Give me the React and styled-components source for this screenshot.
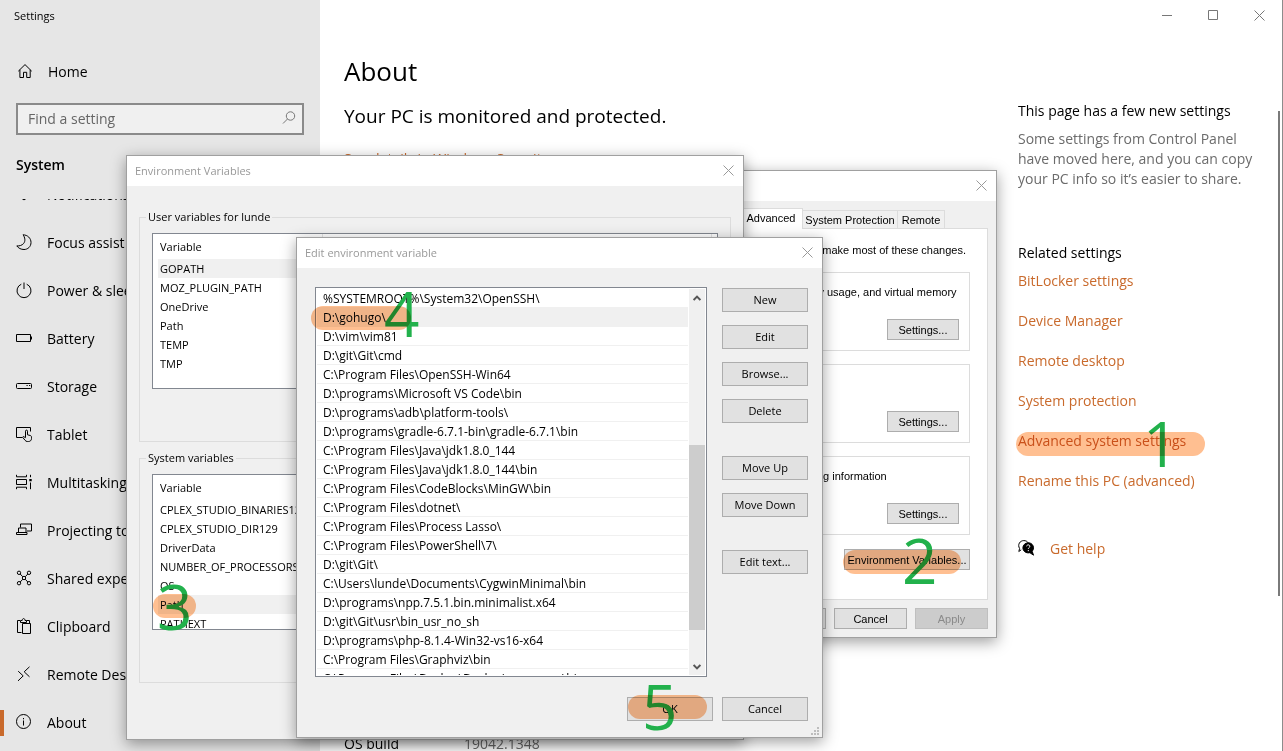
import React from "react";
import styled, { createGlobalStyle, css } from "styled-components";

const ui = '"Open Sans", "Noto Sans", sans-serif';
const legacy = '"Liberation Sans", Arial, sans-serif';
const accent = "#c96a2c";

const GlobalStyle = createGlobalStyle`
  *, *::before, *::after { box-sizing: border-box; }
  body { margin: 0; font-family: ${ui}; color: #000; background: #fff; overflow: hidden; }
  button, input { font: inherit; color: inherit; }
  h1, h2, p, ul, dl, dd { margin: 0; padding: 0; }
  ul { list-style: none; }
`;

/* ---------- Settings window ---------- */

const Desktop = styled.div`
  position: relative;
  display: flex;
  height: 100vh;
  overflow: hidden;
  font-size: 14px;
  line-height: 20px;
  border-right: 1px solid #8c8c8c;
`;

const Sidebar = styled.aside`
  display: flex;
  flex-direction: column;
  flex: 0 0 320px;
  background: #e6e6e6;
`;

const AppTitle = styled.div`
  padding: 8px 14px;
  font-size: 11px;
  line-height: 16px;
`;

const HomeLink = styled.a`
  display: flex;
  align-items: center;
  gap: 15px;
  height: 48px;
  margin-top: 16px;
  padding-left: 17px;
  color: inherit;
  text-decoration: none;
`;

const SearchBox = styled.label`
  display: flex;
  align-items: center;
  height: 32px;
  margin: 7px 16px 0;
  padding: 0 5px 0 10px;
  background: #f0f0f0;
  border: 2px solid #8a8a8a;
  color: #777;
`;

const SearchInput = styled.input`
  flex: 1;
  min-width: 0;
  padding: 0;
  border: 0;
  outline: 0;
  background: transparent;
  &::placeholder { color: #666; opacity: 1; }
`;

const SectionTitle = styled.h2`
  margin: 20px 16px 0;
  font-size: 14px;
  line-height: 20px;
  font-weight: 600;
`;

const NavScroll = styled.nav`
  flex: 1;
  min-height: 0;
  margin-top: 24px;
  overflow: hidden;
`;

const NavList = styled.ul`
  margin-top: -28px;
`;

const NavItem = styled.a`
  display: flex;
  align-items: center;
  gap: 15px;
  height: 48px;
  padding-left: 12px;
  border-left: 4px solid transparent;
  color: inherit;
  text-decoration: none;
  white-space: nowrap;
  ${(p) =>
    p.$active &&
    css`
      border-image: linear-gradient(transparent 25%, ${accent} 25% 75%, transparent 75%) 1;
      border-width: 0 0 0 4px;
      border-style: solid;
    `}
`;

const Icon = styled.svg.attrs({ "aria-hidden": true })`
  flex: none;
  width: 16px;
  height: 16px;
  margin-bottom: 2px;
  fill: none;
  stroke: currentColor;
  stroke-width: 1;
  overflow: visible;
`;

const Content = styled.main`
  display: flex;
  flex-direction: column;
  flex: 1;
  min-width: 0;
`;

const Captions = styled.div`
  display: flex;
  justify-content: flex-end;
  height: 30px;
`;

const CaptionButton = styled.button`
  display: grid;
  place-items: center;
  width: 46px;
  height: 30px;
  padding: 0;
  border: 0;
  background: none;
  color: #777;
`;

const Columns = styled.div`
  display: flex;
  flex: 1;
  min-height: 0;
  padding-left: 24px;
`;

const Details = styled.section`
  flex: 1;
  padding-top: 23px;
`;

const PageTitle = styled.h1`
  font-size: 26px;
  line-height: 36px;
  font-weight: 400;
`;

const Status = styled.h2`
  margin-top: 13px;
  font-size: 19px;
  line-height: 28px;
  font-weight: 400;
`;

const Link = styled.a`
  color: ${accent};
  text-decoration: none;
`;

const SecurityLink = styled(Link)`
  display: block;
  margin-top: 19px;
`;

const Specs = styled.dl`
  display: grid;
  grid-template-columns: 120px 1fr;
  margin-top: 565px;
  dd { color: #6b6b6b; }
`;

const Related = styled.aside`
  flex: 0 0 260px;
  padding: 71px 16px 0 0;
`;

const RelatedTitle = styled.h2`
  font-size: 14px;
  line-height: 20px;
  font-weight: 400;
  & + p { margin: 8px 0 54px; color: #6b6b6b; }
`;

const LinkList = styled.ul`
  display: flex;
  flex-direction: column;
  gap: 20px;
  margin-top: 8px;
`;

const Help = styled.div`
  display: flex;
  align-items: center;
  gap: 16px;
  margin-top: 48px;
`;

const PageScroll = styled.div`
  flex: none;
  width: 2px;
  height: 485px;
  margin: 81px 2px 0 0;
  background: #7a7a7a;
`;

/* ---------- Dialog windows ---------- */

const Dialog = styled.section`
  position: absolute;
  left: ${(p) => p.$x}px;
  top: ${(p) => p.$y}px;
  width: ${(p) => p.$w}px;
  height: ${(p) => p.$h}px;
  display: flex;
  flex-direction: column;
  background: #f0f0f0;
  border: 1px solid #a0a0a0;
  box-shadow: 0 4px 14px rgba(0, 0, 0, 0.38);
  font-size: 11px;
  line-height: 16px;
`;

const DialogTitle = styled.header`
  display: flex;
  align-items: center;
  justify-content: space-between;
  flex: none;
  height: 30px;
  padding: 0 9px 0 8px;
  background: #fff;
  color: #999;
`;

const CloseButton = styled.button`
  display: grid;
  place-items: center;
  width: 12px;
  height: 12px;
  margin-bottom: 2px;
  padding: 0;
  border: 0;
  background: none;
`;

const PushButton = styled.button`
  width: ${(p) => p.$w}px;
  height: ${(p) => p.$h}px;
  padding: 0;
  background: #e1e1e1;
  border: 1px solid #adadad;
  text-align: center;
  white-space: nowrap;
  &:disabled { background: #ccc; border-color: #bfbfbf; color: #8a8a8a; }
`;

/* System Properties */

const SysBody = styled.div`
  padding: 7px 8px 0;
  font-family: ${legacy};
`;

const TabRow = styled.div`
  display: flex;
  align-items: flex-end;
  height: 20px;
`;

const Tab = styled.button`
  width: ${(p) => p.$w}px;
  height: 18px;
  padding: 1px 0 0;
  background: #f0f0f0;
  border: 1px solid #dcdcdc;
  border-width: 1px 1px 0 0;
  ${(p) =>
    p.$active &&
    css`
      position: relative;
      height: 21px;
      margin-bottom: -1px;
      padding: 0 0 2px;
      background: #fff;
    `}
`;

const TabPanel = styled.div`
  display: flex;
  flex-direction: column;
  height: 372px;
  padding: 13px 17px 0;
  background: #fff;
  border: 1px solid #dcdcdc;
`;

const Note = styled.p`
  text-align: right;
  white-space: nowrap;
  padding-right: 4px;
`;

const GroupStack = styled.div`
  display: grid;
  grid-template-columns: minmax(0, 1fr);
  gap: 13px;
  margin: 14px 0;
`;

const Group = styled.div`
  display: flex;
  flex-direction: column;
  height: 79px;
  padding: 11px 10px 10px;
  border: 1px solid #dcdcdc;
  p { white-space: nowrap; }
  button { margin: auto 0 0 auto; }
`;

const EnvButton = styled(PushButton)`
  align-self: flex-end;
`;

const Footer = styled.footer`
  display: flex;
  justify-content: flex-end;
  gap: 8px;
  padding-top: ${(p) => p.$top}px;
`;

/* Environment Variables */

const EnvBody = styled.div`
  display: grid;
  gap: 8px;
  padding: 23px 12px 0;
`;

const VariableGroup = styled.fieldset`
  min-width: 0;
  height: 233px;
  margin: 0;
  padding: 8px 12px 0;
  border: 1px solid #dcdcdc;
  legend { margin-left: -6px; padding: 0 2px; line-height: 16px; }
`;

const VariableBox = styled.div`
  height: 156px;
  padding: 0 5px;
  overflow: hidden;
  background: #fff;
  border: 1px solid #828790;
`;

const VariableTable = styled.table`
  width: 100%;
  border-collapse: collapse;
  table-layout: fixed;
  th, td { padding: 0 2px; text-align: left; font-weight: 400; white-space: nowrap; }
  th { height: 25px; border-right: 1px solid #e5e5e5; }
  th:first-child { width: 164px; }
  td { height: 19px; }
`;

const VariableRow = styled.tr`
  background: ${(p) => (p.$selected ? "#f0f0f0" : "#fff")};
`;

/* Edit environment variable */

const EditBody = styled.div`
  display: flex;
  gap: 15px;
  padding: 19px 14px 0 18px;
`;

const PathBox = styled.div`
  display: flex;
  flex: 1;
  min-width: 0;
  height: 390px;
  padding: 1px;
  overflow: hidden;
  background: #fff;
  border: 1px solid #828790;
`;

const PathList = styled.ul`
  flex: 1;
  min-width: 0;
  overflow: hidden;
  font-size: 12px;
`;

const PathRow = styled.li`
  height: 19px;
  padding-left: 6px;
  line-height: 19px;
  white-space: nowrap;
  border-bottom: 1px solid #f0f0f0;
  background: ${(p) => (p.$selected ? "#f0f0f0" : "#fff")};
`;

const ScrollTrack = styled.div`
  display: flex;
  flex-direction: column;
  flex: none;
  width: 16px;
  margin-left: 1px;
  background: #f0f0f0;
`;

const ScrollArrow = styled.button`
  display: grid;
  place-items: center;
  width: 16px;
  height: 17px;
  padding: 0;
  border: 0;
  background: none;
  color: #555;
`;

const ScrollThumb = styled.div`
  height: 185px;
  margin: 139px 0 auto;
  background: #cdcdcd;
`;

const ButtonColumn = styled.div`
  display: grid;
  align-content: start;
  gap: 13px;
  padding-top: 1px;
`;

const ButtonGroup = styled.div`
  display: grid;
  gap: 13px;
  margin-bottom: 20px;
`;

const EditFooter = styled(Footer)`
  gap: 9px;
  padding-right: 14px;
`;

const Grip = styled(Icon)`
  position: absolute;
  right: 2px;
  bottom: 1px;
  width: 9px;
  height: 9px;
  margin: 0;
  fill: #bdbdbd;
  stroke: none;
`;

/* ---------- Step annotations ---------- */

const Step = styled.span`
  position: absolute;
  left: ${(p) => p.$x}px;
  top: ${(p) => p.$y}px;
  font-size: 62px;
  line-height: 62px;
  color: #22b14c;
  pointer-events: none;
`;

const Highlight = styled.span`
  position: absolute;
  left: ${(p) => p.$x}px;
  top: ${(p) => p.$y}px;
  width: ${(p) => p.$w}px;
  height: 24px;
  border-radius: 12px;
  background: #ffbf91;
  mix-blend-mode: multiply;
  pointer-events: none;
`;

const Cross = ({ size = 11 }) => (
  <svg width={size} height={size} viewBox="0 0 11 11" fill="none" stroke="currentColor" aria-hidden="true">
    <path d="M.5 .5l10 10M10.5 .5l-10 10" />
  </svg>
);

const icons = {
  Home: <path d="M1.3 8.2L8 1.6l6.7 6.6M2.9 6.8v7.7h3.6V9.3h3.2v5.2h3.5V6.8" />,
  "Notifications & actions": (
    <path d="M1.5 9.5h13v2h-13zM6 12.5c.5 1.6 3.5 1.6 4 0" />
  ),
  "Focus assist": (
    <path d="M7 .8C11.6.9 15 4.2 15 8.5C15 12.8 11.7 15.5 8 15.5C5 15.5 2.4 14.2.8 11.9C3.4 12.1 6 11.4 7.6 9.5C9.6 7.2 9.1 3.4 7 .8z" />
  ),
  "Power & sleep": <path d="M8 .5v6.5M5.3 2.2a7 7 0 1 0 5.4 0" />,
  Battery: <path d="M.5 4.5h14v7H.5zM15.5 6.5v3" />,
  Storage: (
    <>
      <rect x=".5" y="5.5" width="15" height="5" rx="1" />
      <path d="M10.5 7.5h1.200M13 7.5h1.200" />
    </>
  ),
  Tablet: (
    <>
      <path d="M6.5 11.5h-6v-10h14v4" />
      <path d="M9.5 11.500V5.200c0-1.500 2-1.500 2 0v3.600l2.800.7c.9.2 1.200.9 1.200 1.700v1.300c0 1.900-1.300 3-3 3h-1.200c-1 0-1.700-.4-2.200-1.200L6.900 11.600c-.5-.9.9-1.600 1.500-.8l1.100 1.300" />
    </>
  ),
  Multitasking: (
    <>
      <path d="M.5 .8v2h10v-2M.5 15.200v-2h10v2M.5 5.5h10v5H.5z" />
      <path d="M14.5 .8v2.400M14.5 8.500v6.700" />
      <path d="M13.3 5h2.400v2.200h-2.400z" fill="currentColor" stroke="none" />
    </>
  ),
  "Projecting to this PC": (
    <path d="M4.5 5.500v-3.500h11v7h-4.500M2.500 10.500v-4.500h7.500v4.500M.5 10.500h10.500v2H.5z" />
  ),
  "Shared experiences": (
    <>
      <circle cx="3" cy="2.8" r="1.7" />
      <circle cx="13" cy="2.8" r="1.7" />
      <circle cx="3" cy="13.2" r="1.7" />
      <circle cx="13" cy="13.2" r="1.7" />
      <circle cx="8" cy="8" r="1.7" />
      <path d="M4.2 4l2.600 2.800M11.800 4L9.200 6.800M4.200 12l2.600-2.800M11.800 12L9.200 9.200" />
    </>
  ),
  Clipboard: (
    <path d="M5.500 14.500H1.500V2.500h3V4.500h6V2.500h3V5.200M5 2.500h1.200c0-2.600 2.800-2.600 2.800 0h1.300M6.500 5.500h8v10h-8z" />
  ),
  "Remote Desktop": <path d="M2.200 5.200l5 4.700-5.200 5M13.500 .8L8.200 5.800l5.300 5" />,
  About: (
    <>
      <circle cx="7.5" cy="7.5" r="7" />
      <path d="M7.5 6.500v5M7.5 4v1.300" />
    </>
  ),
};

const userVariables = ["GOPATH", "MOZ_PLUGIN_PATH", "OneDrive", "Path", "TEMP", "TMP"];
const systemVariables = [
  "CPLEX_STUDIO_BINARIES129",
  "CPLEX_STUDIO_DIR129",
  "DriverData",
  "NUMBER_OF_PROCESSORS",
  "OS",
  "Path",
  "PATHEXT",
];
const paths = [
  "%SYSTEMROOT%\\System32\\OpenSSH\\",
  "D:\\gohugo\\",
  "D:\\vim\\vim81",
  "D:\\git\\Git\\cmd",
  "C:\\Program Files\\OpenSSH-Win64",
  "D:\\programs\\Microsoft VS Code\\bin",
  "D:\\programs\\adb\\platform-tools\\",
  "D:\\programs\\gradle-6.7.1-bin\\gradle-6.7.1\\bin",
  "C:\\Program Files\\Java\\jdk1.8.0_144",
  "C:\\Program Files\\Java\\jdk1.8.0_144\\bin",
  "C:\\Program Files\\CodeBlocks\\MinGW\\bin",
  "C:\\Program Files\\dotnet\\",
  "C:\\Program Files\\Process Lasso\\",
  "C:\\Program Files\\PowerShell\\7\\",
  "D:\\git\\Git\\",
  "C:\\Users\\lunde\\Documents\\CygwinMinimal\\bin",
  "D:\\programs\\npp.7.5.1.bin.minimalist.x64",
  "D:\\git\\Git\\usr\\bin_usr_no_sh",
  "D:\\programs\\php-8.1.4-Win32-vs16-x64",
  "C:\\Program Files\\Graphviz\\bin",
  "C:\\Program Files\\Docker\\Docker\\resources\\bin",
];
const relatedLinks = [
  "BitLocker settings",
  "Device Manager",
  "Remote desktop",
  "System protection",
  "Advanced system settings",
  "Rename this PC (advanced)",
];

const Variables = ({ legend, names, selected }) => (
  <VariableGroup>
    <legend>{legend}</legend>
    <VariableBox>
      <VariableTable>
        <thead>
          <tr>
            <th scope="col">Variable</th>
            <th />
          </tr>
        </thead>
        <tbody>
          {names.map((name) => (
            <VariableRow key={name} $selected={name === selected}>
              <td>{name}</td>
              <td />
            </VariableRow>
          ))}
        </tbody>
      </VariableTable>
    </VariableBox>
  </VariableGroup>
);

const SystemProperties = () => (
  <Dialog $x={565} $y={170} $w={432} $h={468}>
    <DialogTitle>
      <span />
      <CloseButton aria-label="Close"><Cross /></CloseButton>
    </DialogTitle>
    <SysBody>
      <TabRow role="tablist">
        <Tab role="tab" $w={98} />
        <Tab role="tab" $w={68} />
        <Tab role="tab" $w={63} $active>Advanced</Tab>
        <Tab role="tab" $w={95}>System Protection</Tab>
        <Tab role="tab" $w={47}>Remote</Tab>
      </TabRow>
      <TabPanel>
        <Note>You must be logged on as an Administrator to make most of these changes.</Note>
        <GroupStack>
          <Group>
            <p>Visual effects, processor scheduling, memory usage, and virtual memory</p>
            <PushButton $w={72} $h={21}>Settings...</PushButton>
          </Group>
          <Group>
            <PushButton $w={72} $h={21}>Settings...</PushButton>
          </Group>
          <Group>
            <p>System startup, system failure, and debugging information</p>
            <PushButton $w={72} $h={21}>Settings...</PushButton>
          </Group>
        </GroupStack>
        <EnvButton $w={126} $h={21}>Environment Variables...</EnvButton>
      </TabPanel>
      <Footer $top={8}>
        <PushButton $w={73} $h={21} aria-label="OK" />
        <PushButton $w={73} $h={21}>Cancel</PushButton>
        <PushButton $w={73} $h={21} disabled>Apply</PushButton>
      </Footer>
    </SysBody>
  </Dialog>
);

const EnvironmentVariables = () => (
  <Dialog $x={126} $y={155} $w={618} $h={585}>
    <DialogTitle>
      Environment Variables
      <CloseButton aria-label="Close"><Cross /></CloseButton>
    </DialogTitle>
    <EnvBody>
      <Variables legend="User variables for lunde" names={userVariables} selected="GOPATH" />
      <Variables legend="System variables" names={systemVariables} selected="Path" />
    </EnvBody>
  </Dialog>
);

const EditVariable = () => (
  <Dialog $x={296} $y={237} $w={527} $h={501}>
    <DialogTitle>
      Edit environment variable
      <CloseButton aria-label="Close"><Cross /></CloseButton>
    </DialogTitle>
    <EditBody>
      <PathBox>
        <PathList>
          {paths.map((path, i) => (
            <PathRow key={path} $selected={i === 1}>{path}</PathRow>
          ))}
        </PathList>
        <ScrollTrack>
          <ScrollArrow aria-label="Scroll up">
            <svg width="8" height="6" viewBox="0 0 8 6" fill="none" stroke="currentColor" strokeWidth="2"><path d="M.6 5L4 1.600 7.400 5" /></svg>
          </ScrollArrow>
          <ScrollThumb />
          <ScrollArrow aria-label="Scroll down">
            <svg width="8" height="6" viewBox="0 0 8 6" fill="none" stroke="currentColor" strokeWidth="2"><path d="M.6 1L4 4.400 7.400 1" /></svg>
          </ScrollArrow>
        </ScrollTrack>
      </PathBox>
      <ButtonColumn>
        <ButtonGroup>
          {["New", "Edit", "Browse...", "Delete"].map((label) => (
            <PushButton key={label} $w={86} $h={24}>{label}</PushButton>
          ))}
        </ButtonGroup>
        <ButtonGroup>
          <PushButton $w={86} $h={24}>Move Up</PushButton>
          <PushButton $w={86} $h={24}>Move Down</PushButton>
        </ButtonGroup>
        <PushButton $w={86} $h={24}>Edit text...</PushButton>
      </ButtonColumn>
    </EditBody>
    <EditFooter $top={20}>
      <PushButton $w={86} $h={24}>OK</PushButton>
      <PushButton $w={86} $h={24}>Cancel</PushButton>
    </EditFooter>
    <Grip viewBox="0 0 9 9">
      <path d="M6 0h2v2H6zM6 3h2v2H6zM6 6h2v2H6zM3 3h2v2H3zM3 6h2v2H3zM0 6h2v2H0z" />
    </Grip>
  </Dialog>
);

export default function App() {
  return (
    <>
      <GlobalStyle />
      <Desktop>
        <Sidebar>
          <AppTitle>Settings</AppTitle>
          <HomeLink href="#home">
            <Icon viewBox="0 0 16 16">{icons.Home}</Icon>
            Home
          </HomeLink>
          <SearchBox>
            <SearchInput type="text" placeholder="Find a setting" aria-label="Find a setting" />
            <Icon viewBox="0 0 16 16">
              <circle cx="9.5" cy="6" r="4.2" />
              <path d="M6.500 9L2 13.500" />
            </Icon>
          </SearchBox>
          <SectionTitle>System</SectionTitle>
          <NavScroll>
            <NavList>
              {Object.keys(icons).slice(1).map((name) => (
                <li key={name}>
                  <NavItem href="#section" $active={name === "About"}>
                    <Icon viewBox="0 0 16 16">{icons[name]}</Icon>
                    {name}
                  </NavItem>
                </li>
              ))}
            </NavList>
          </NavScroll>
        </Sidebar>

        <Content>
          <Captions>
            <CaptionButton aria-label="Minimize">
              <svg width="11" height="11" stroke="currentColor"><path d="M0 5.500h10" /></svg>
            </CaptionButton>
            <CaptionButton aria-label="Maximize">
              <svg width="11" height="11" stroke="currentColor" fill="none"><path d="M.5 .5h9v9H.5z" /></svg>
            </CaptionButton>
            <CaptionButton aria-label="Close window"><Cross /></CaptionButton>
          </Captions>
          <Columns>
            <Details>
              <PageTitle>About</PageTitle>
              <Status>Your PC is monitored and protected.</Status>
              <SecurityLink href="#security">See details in Windows Security</SecurityLink>
              <Specs>
                <dt>OS build</dt>
                <dd>19042.1348</dd>
              </Specs>
            </Details>
            <Related>
              <RelatedTitle>This page has a few new settings</RelatedTitle>
              <p>
                Some settings from Control Panel have moved here, and you can copy your PC info so it’s easier to share.
              </p>
              <RelatedTitle>Related settings</RelatedTitle>
              <LinkList>
                {relatedLinks.map((label) => (
                  <li key={label}><Link href="#related">{label}</Link></li>
                ))}
              </LinkList>
              <Help>
                <Icon viewBox="0 0 16 16">
                  <path d="M3.200 9.800L.8 11.500l.8-3C-.8 4.500 2 .6 5.800 .6c2 0 3.500.8 4.400 2.200" />
                  <path d="M10.300 2.800c3 0 5.200 2.300 5.200 5 0 1.400-.5 2.600-1.300 3.500l1.300 3.900-3.600-2.500c-3.900.9-7-1.600-7-4.900 0-2.700 2.400-5 5.400-5z" fill="currentColor" />
                  <path d="M8.600 6.300c.2-2 3.400-1.800 3.200.1-.1 1.100-1.500 1.200-1.500 2.500M10.300 10v1.200" stroke="#fff" />
                </Icon>
                <Link href="#help">Get help</Link>
              </Help>
            </Related>
            <PageScroll />
          </Columns>
        </Content>

        <SystemProperties />
        <EnvironmentVariables />
        <EditVariable />

        <Step $x={1143} $y={412}>1</Step>
        <Step $x={902} $y={529}>2</Step>
        <Step $x={157} $y={575}>3</Step>
        <Step $x={384} $y={282}>4</Step>
        <Step $x={642} $y={675}>5</Step>
        <Highlight $x={1016} $y={432} $w={189} />
        <Highlight $x={843} $y={550} $w={118} />
        <Highlight $x={153} $y={594} $w={43} />
        <Highlight $x={311} $y={306} $w={100} />
        <Highlight $x={628} $y={695} $w={79} />
      </Desktop>
    </>
  );
}
